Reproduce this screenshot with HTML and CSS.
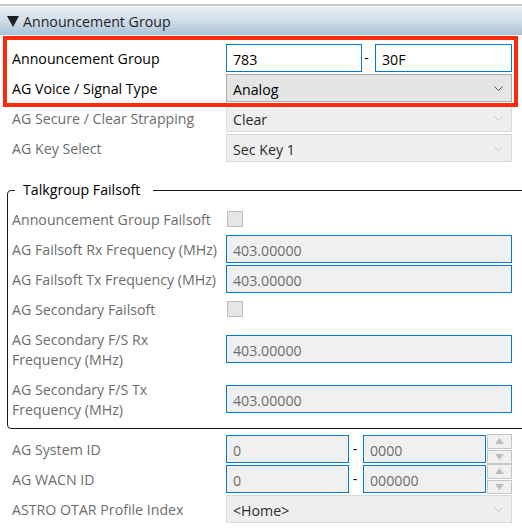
FILE: index.html
```html
<!DOCTYPE html>
<html>
<head>
<meta charset="utf-8">
<link rel="stylesheet" href="styles.css">
</head>
<body>
<div class="topbar"></div>
<div class="header">
  <svg class="tri" width="12" height="11" viewBox="0 0 12 11"><polygon points="0,0 12,0 6,11" fill="#1e1e1e"/></svg>
  <span>Announcement Group</span>
</div>

<div class="form">
  <div class="row">
    <div class="lbl on">Announcement Group</div>
    <div class="pair">
      <div class="tb on">783</div>
      <div class="dash">-</div>
      <div class="tb on">30F</div>
    </div>
  </div>
  <div class="row">
    <div class="lbl on">AG Voice / Signal Type</div>
    <div class="cb on">Analog
      <svg class="chev" width="9" height="5" viewBox="0 0 9 5"><polyline points="0.5,0.5 4.5,4.5 8.5,0.5" fill="none" stroke="#555" stroke-width="1"/></svg>
    </div>
  </div>
  <div class="row">
    <div class="lbl">AG Secure / Clear Strapping</div>
    <div class="cb">Clear
      <svg class="chev" width="9" height="5" viewBox="0 0 9 5"><polyline points="0.5,0.5 4.5,4.5 8.5,0.5" fill="none" stroke="#c4c4c4" stroke-width="1"/></svg>
    </div>
  </div>
  <div class="row">
    <div class="lbl">AG Key Select</div>
    <div class="cb">Sec Key 1
      <svg class="chev" width="9" height="5" viewBox="0 0 9 5"><polyline points="0.5,0.5 4.5,4.5 8.5,0.5" fill="none" stroke="#c4c4c4" stroke-width="1"/></svg>
    </div>
  </div>

  <fieldset class="group">
    <legend>Talkgroup Failsoft</legend>
    <div class="row in">
      <div class="lbl">Announcement Group Failsoft</div>
      <div class="chk"></div>
    </div>
    <div class="row in">
      <div class="lbl">AG Failsoft Rx Frequency (MHz)</div>
      <div class="tb">403.00000</div>
    </div>
    <div class="row in">
      <div class="lbl">AG Failsoft Tx Frequency (MHz)</div>
      <div class="tb">403.00000</div>
    </div>
    <div class="row in">
      <div class="lbl">AG Secondary Failsoft</div>
      <div class="chk"></div>
    </div>
    <div class="row in two">
      <div class="lbl">AG Secondary F/S Rx<br>Frequency (MHz)</div>
      <div class="tb">403.00000</div>
    </div>
    <div class="row in two">
      <div class="lbl">AG Secondary F/S Tx<br>Frequency (MHz)</div>
      <div class="tb">403.00000</div>
    </div>
  </fieldset>

  <div class="row">
    <div class="lbl">AG System ID</div>
    <div class="pair4">
      <div class="tb">0</div>
      <div class="dash">-</div>
      <div class="tb">0000</div>
      <div class="spin">
        <div class="sbtn"><svg width="9" height="6" viewBox="0 0 9 6"><polygon points="0,6 9,6 4.5,0" fill="#bdbdbd"/></svg></div>
        <div class="sbtn"><svg width="9" height="6" viewBox="0 0 9 6"><polygon points="0,0 9,0 4.5,6" fill="#bdbdbd"/></svg></div>
      </div>
    </div>
  </div>
  <div class="row">
    <div class="lbl">AG WACN ID</div>
    <div class="pair4">
      <div class="tb">0</div>
      <div class="dash">-</div>
      <div class="tb">000000</div>
      <div class="spin">
        <div class="sbtn"><svg width="9" height="6" viewBox="0 0 9 6"><polygon points="0,6 9,6 4.5,0" fill="#bdbdbd"/></svg></div>
        <div class="sbtn"><svg width="9" height="6" viewBox="0 0 9 6"><polygon points="0,0 9,0 4.5,6" fill="#bdbdbd"/></svg></div>
      </div>
    </div>
  </div>
  <div class="row">
    <div class="lbl">ASTRO OTAR Profile Index</div>
    <div class="cb">&lt;Home&gt;
      <svg class="chev" width="9" height="5" viewBox="0 0 9 5"><polyline points="0.5,0.5 4.5,4.5 8.5,0.5" fill="none" stroke="#c4c4c4" stroke-width="1"/></svg>
    </div>
  </div>
</div>

<div class="highlight"></div>
</body>
</html>
```

FILE: styles.css
```css
html, body {
  margin: 0;
  padding: 0;
}
body {
  width: 522px;
  height: 532px;
  overflow: hidden;
  position: relative;
  background: #ffffff;
  font-family: "Open Sans", "Noto Sans", sans-serif;
  font-size: 14.2px;
  color: #000;
}
.topbar {
  height: 4px;
  border-bottom: 2px solid #c8c8c8;
  margin-bottom: 1px;
}
.header {
  height: 28px;
  display: flex;
  align-items: center;
  padding-left: 7px;
  background: linear-gradient(#e9eff6 0%, #d3dfeb 45%, #a9c2d7 100%);
  color: #1e1e1e;
}
.header span {
  padding-top: 1px;
}
.tri {
  margin-right: 4px;
  flex: none;
}
.form {
  padding-top: 8px;
}
.row {
  display: grid;
  grid-template-columns: 214px 286px;
  align-items: center;
  height: 30px;
  padding-left: 12px;
}
.row.in {
  padding-left: 4px;
}
.row.two {
  height: 50px;
}
.lbl {
  color: #6d6d6d;
  line-height: 20px;
  padding-top: 1px;
  white-space: nowrap;
}
.lbl.on {
  color: #000;
}
.tb {
  box-sizing: border-box;
  height: 28px;
  line-height: 27px;
  padding-top: 1px;
  border: 1px solid #0078d7;
  background: #f0f0f0;
  color: #6d6d6d;
  padding-left: 6px;
  white-space: nowrap;
  overflow: hidden;
}
.tb.on {
  background: #ffffff;
  color: #000;
}
.pair {
  display: grid;
  grid-template-columns: 136px 1fr 137px;
  align-items: center;
}
.pair4 {
  display: grid;
  grid-template-columns: 123px 14px 123px 26px;
  align-items: center;
}
.dash {
  text-align: center;
  color: #000;
  line-height: 26px;
}
.pair .dash {
  padding-right: 4px;
}
.pair4 .dash {
  padding-right: 2px;
}
.cb {
  box-sizing: border-box;
  height: 28px;
  line-height: 27px;
  padding-top: 1px;
  border: 1px solid #d9d9d9;
  background: #efefef;
  color: #2b2b2b;
  padding-left: 6px;
  position: relative;
}
.cb.on {
  border-color: #acacac;
  background: #e5e5e5;
  color: #000;
}
.chev {
  position: absolute;
  right: 8px;
  top: 11px;
}
.chk {
  box-sizing: border-box;
  width: 16px;
  height: 16px;
  margin-left: 1px;
  background: #e6e6e6;
  border: 1px solid #bcbcbc;
}
.group {
  margin: 17px -20px 5px 7px;
  padding: 4px 0 4px 0;
  border: 1px solid #1a1a1a;
  border-radius: 4px;
  min-width: 0;
}
.group legend {
  margin-left: 7px;
  padding: 0 13px 0 8px;
  line-height: 20px;
  color: #000;
}
.spin {
  margin-left: 1px;
  width: 25px;
  height: 30px;
  display: flex;
  flex-direction: column;
  gap: 1px;
}
.sbtn {
  box-sizing: border-box;
  flex: 1;
  border: 1px solid #c6c6c6;
  background: #f0f0f0;
  display: flex;
  align-items: center;
  justify-content: center;
}
.highlight {
  position: absolute;
  left: 3px;
  top: 36px;
  width: 515px;
  height: 71px;
  box-sizing: border-box;
  border: 4px solid #fb2b0b;
  pointer-events: none;
}
```
